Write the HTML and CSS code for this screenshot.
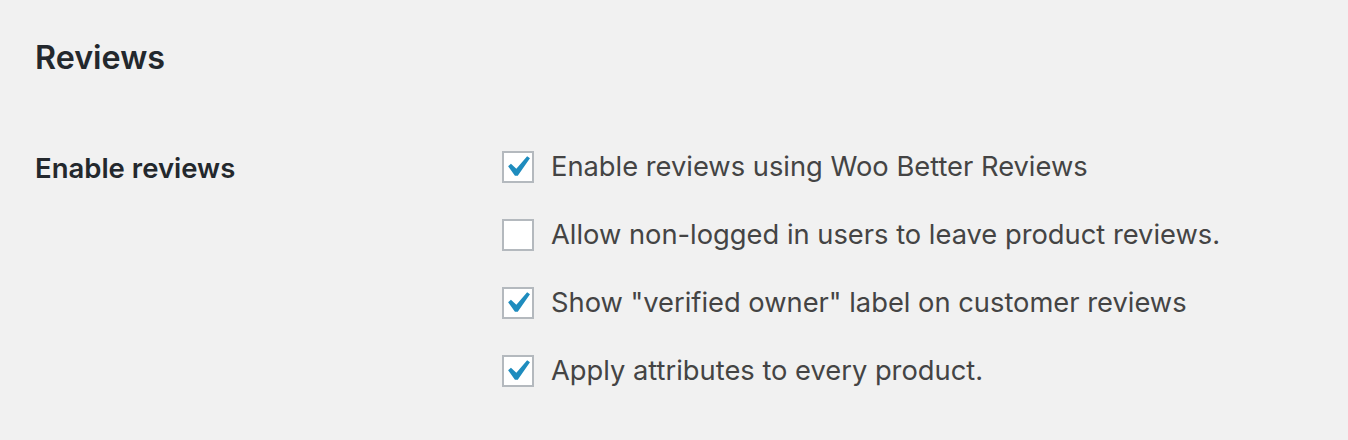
FILE: index.html
```html
<!DOCTYPE html>
<html>
<head>
<meta charset="utf-8">
<link rel="stylesheet" href="styles.css">
</head>
<body>
<div class="wrap">
  <h2 class="title">Reviews</h2>
  <div class="form-row">
    <div class="row-label">Enable reviews</div>
    <div class="options">
      <label class="opt"><span class="cb checked"><svg viewBox="0 0 20 20" class="tick"><path d="M14.83 4.89l1.34.94-5.81 8.38H9.02L5.78 9.67l1.34-1.25 2.57 2.4z"/></svg></span><span class="opt-text">Enable reviews using Woo Better Reviews</span></label>
      <label class="opt"><span class="cb"></span><span class="opt-text">Allow non-logged in users to leave product reviews.</span></label>
      <label class="opt"><span class="cb checked"><svg viewBox="0 0 20 20" class="tick"><path d="M14.83 4.89l1.34.94-5.81 8.38H9.02L5.78 9.67l1.34-1.25 2.57 2.4z"/></svg></span><span class="opt-text">Show "verified owner" label on customer reviews</span></label>
      <label class="opt"><span class="cb checked"><svg viewBox="0 0 20 20" class="tick"><path d="M14.83 4.89l1.34.94-5.81 8.38H9.02L5.78 9.67l1.34-1.25 2.57 2.4z"/></svg></span><span class="opt-text">Apply attributes to every product.</span></label>
    </div>
  </div>
</div>
</body>
</html>
```

FILE: styles.css
```css
html, body {
  margin: 0;
  padding: 0;
  background: #f1f1f1;
}
body {
  font-family: Inter, "Open Sans", "Liberation Sans", sans-serif;
  color: #444;
}
.wrap {
  padding: 37px 35px 0 35px;
}
.title {
  margin: 0;
  font-size: 32.3px;
  font-weight: 600;
  line-height: 42px;
  color: #23282d;
}
.form-row {
  display: flex;
  margin-top: 72px;
}
.row-label {
  width: 467px;
  flex: none;
  font-size: 27.5px;
  font-weight: 600;
  color: #23282d;
  line-height: 34px;
  padding-top: 0;
}
.options {
  display: flex;
  flex-direction: column;
  gap: 36px;
}
.opt {
  display: flex;
  align-items: center;
  height: 32px;
}
.cb {
  position: relative;
  box-sizing: border-box;
  width: 32px;
  height: 32px;
  border: 2px solid #b4b9be;
  background: #fff;
  flex: none;
  margin-right: 17px;
}
.tick {
  position: absolute;
  left: -8px;
  top: -7px;
  width: 42px;
  height: 42px;
  fill: #1e8cbe;
}
.opt-text {
  font-size: 27.3px;
  line-height: 34px;
  color: #444;
}
```
